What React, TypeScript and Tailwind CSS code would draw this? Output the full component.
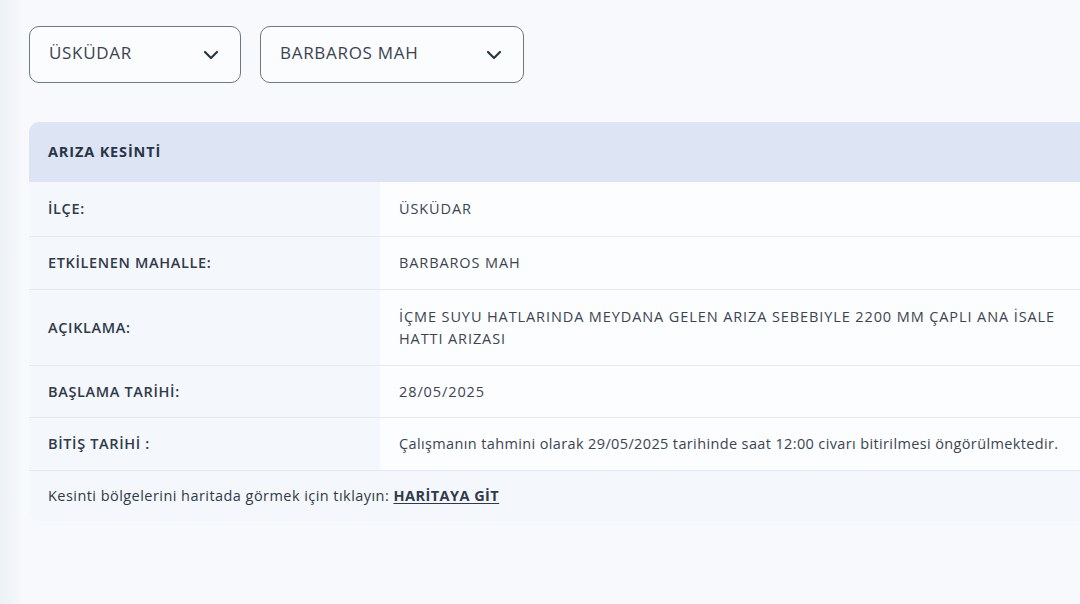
import React from "react";

const font = { fontFamily: "'Open Sans', 'Noto Sans', sans-serif" };

function Chevron() {
  return (
    <svg width="16" height="10" viewBox="0 0 16 10" fill="none">
      <path d="M2 2l6 6 6-6" stroke="#2a3544" strokeWidth="2.2" strokeLinecap="round" strokeLinejoin="round" />
    </svg>
  );
}

function Select({ label, width }: { label: string; width: string }) {
  return (
    <div className={`${width} h-[57px] border border-[#6f7782] rounded-[10px] flex items-center justify-between pl-[19px] pr-[21px] bg-[#fbfcfe] shrink-0`}>
      <span className="text-[17px] text-[#3a4350] tracking-[0.7px] -mt-[3px]">{label}</span>
      <Chevron />
    </div>
  );
}

const rows: { label: string; value: React.ReactNode; h: string; lower?: boolean }[] = [
  { label: "İLÇE:", value: "ÜSKÜDAR", h: "h-[54px]" },
  { label: "ETKİLENEN MAHALLE:", value: "BARBAROS MAH", h: "h-[53px]" },
  {
    label: "AÇIKLAMA:",
    value: (
      <>
        İÇME SUYU HATLARINDA MEYDANA GELEN ARIZA SEBEBIYLE 2200 MM ÇAPLI ANA İSALE
        <br />
        HATTI ARIZASI
      </>
    ),
    h: "h-[76px]",
  },
  { label: "BAŞLAMA TARİHİ:", value: "28/05/2025", h: "h-[52px]" },
  {
    label: "BİTİŞ TARİHİ :",
    value: "Çalışmanın tahmini olarak 29/05/2025 tarihinde saat 12:00 civarı bitirilmesi öngörülmektedir.",
    h: "h-[53px]",
    lower: true,
  },
];

export default function App() {
  return (
    <div style={font} className="w-[1080px] h-[604px] overflow-hidden bg-[#f7f9fc] flex">
      <div className="w-[24px] shrink-0 bg-gradient-to-r from-[#edf0f4] to-[#f7f9fc]" />
      <div className="flex-1 min-w-0 pl-[5px] pt-[26px] flex flex-col">
        <div className="flex gap-[19px]">
          <Select label="ÜSKÜDAR" width="w-[212px]" />
          <Select label="BARBAROS MAH" width="w-[264px]" />
        </div>
        <div className="mt-[39px] w-[1060px] shrink-0 rounded-l-[10px] overflow-hidden bg-[#f4f7fb]">
          <div className="h-[60px] bg-[#dde5f4] flex items-center pl-[19px]">
            <span className="text-[14.5px] font-bold text-[#2a3446] tracking-[0.85px]">ARIZA KESİNTİ</span>
          </div>
          {rows.map((r, i) => (
            <div key={i} className={`flex ${r.h} ${i > 0 ? "border-t border-[#e6eaf0]" : ""}`}>
              <div className="w-[351px] shrink-0 flex items-center pl-[19px] bg-[#f4f7fb]">
                <span className="text-[14.5px] font-semibold text-[#2f3a4a] tracking-[0.65px]">{r.label}</span>
              </div>
              <div className="flex-1 flex items-center pl-[19px] bg-[#fcfdff]">
                <span className={`text-[14.5px] text-[#3b4450] leading-[22px] ${r.lower ? "tracking-[0.37px]" : "tracking-[0.9px]"}`}>{r.value}</span>
              </div>
            </div>
          ))}
          <div className="h-[51px] border-t border-[#e6eaf0] flex items-center pl-[19px] bg-[#f4f7fb]">
            <span className="text-[14.5px] text-[#2f3a4a] tracking-[0.45px]">
              Kesinti bölgelerini haritada görmek için tıklayın:{" "}
              <span className="font-bold underline underline-offset-2">HARİTAYA GİT</span>
            </span>
          </div>
        </div>
      </div>
    </div>
  );
}
